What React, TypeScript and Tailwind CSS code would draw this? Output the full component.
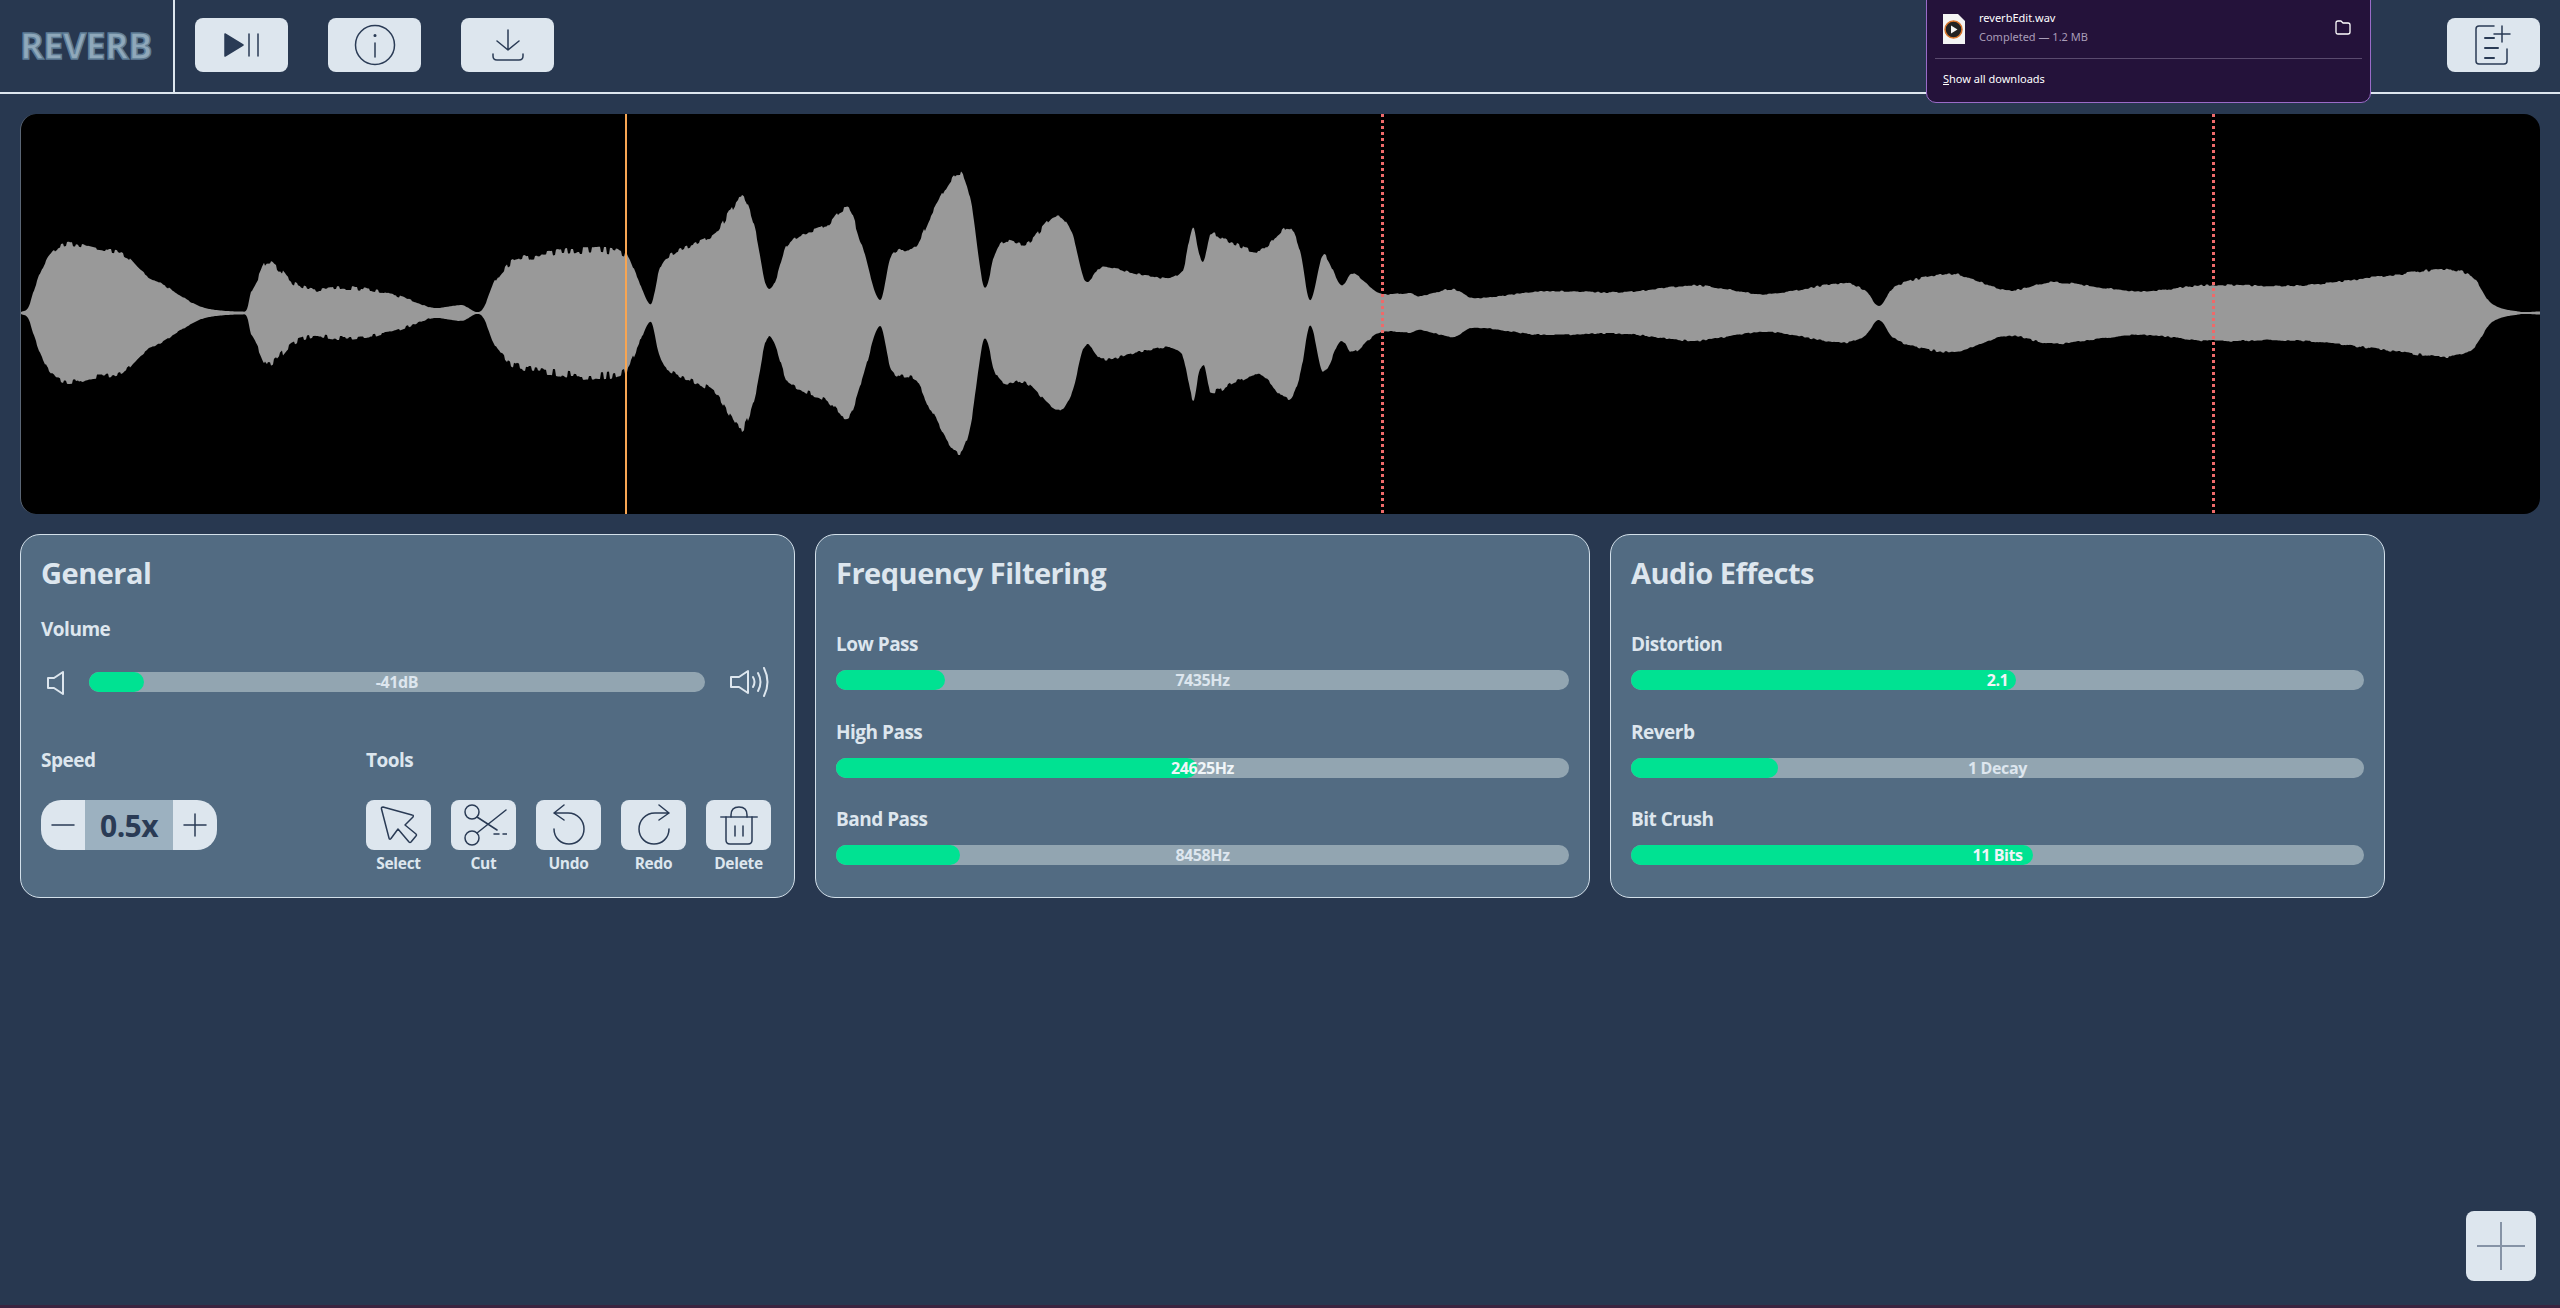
import React from "react";

const ENV: [number, number][] = [
  [20,1],[27,5],[33,23],[39,40],[49,60],[66,70],[93,65],[121,60],[143,40],[165,27],[192,10],[208,4],[241,1.5],[246,4],[250,22],[255,33],[268,55],[291,33],[313,25],[343,27],[384,22],[411,13],[433,5],[461,8],[480,2],[494,33],[510,53],[549,62],[584,66],[625,60],[636,37],[650,9],[658,43],[666,57],[713,80],[730,105],[738,117],[745,112],[755,80],[765,28],[773,30],[787,70],[823,87],[847,105],[860,72],
  [879,13],[890,57],[915,68],[931,100],[958,140],[970,110],[983,27],[994,60],[1003,72],[1025,70],[1056,98],[1071,80],[1084,33],[1101,47],[1145,38],[1181,42],[1192,87],[1198,60],[1203,53],[1209,78],[1233,70],[1260,63],[1288,87],[1299,63],[1309,13],[1322,58],[1340,28],[1351,40],[1378,20],[1408,20],[1419,17],[1452,24],[1472,15],[1540,22],[1622,21],[1691,28],[1720,25],
  [1766,19],[1843,30],[1865,22],[1878,7],[1892,25],[1919,35],[1955,39],[2007,23],[2051,31],[2139,22],[2205,28],[2303,28],[2397,39],[2449,44],[2473,35],[2490,10],[2517,1.5],[2540,1.5],
];

function ampAt(x: number) {
  for (let i = 1; i < ENV.length; i++) {
    if (x <= ENV[i][0]) {
      const [x0, a0] = ENV[i - 1];
      const [x1, a1] = ENV[i];
      const [xp, ap] = ENV[Math.max(0, i - 2)];
      const [xn, an] = ENV[Math.min(ENV.length - 1, i + 1)];
      const h = x1 - x0;
      const t = (x - x0) / h;
      const m0 = ((a1 - ap) / (x1 - xp)) * h;
      const m1 = ((an - a0) / (xn - x0)) * h;
      const t2 = t * t;
      const t3 = t2 * t;
      const v = (2 * t3 - 3 * t2 + 1) * a0 + (t3 - 2 * t2 + t) * m0 + (-2 * t3 + 3 * t2) * a1 + (t3 - t2) * m1;
      return Math.max(1, v);
    }
  }
  return 1.5;
}

function noise(i: number, s: number) {
  const v = Math.sin(i * 12.9898 + s * 78.233) * 43758.5453;
  return v - Math.floor(v);
}

function spike(x: number, s: number, a: number) {
  if (a < 6) return 0;
  if (x < 860) {
    const cell = Math.floor(x / 3);
    const on = noise(cell, 7) > 0.4 ? 1 : 0.2;
    const strength = x > 480 && x < 640 ? 0.13 : x > 250 && x < 430 ? 0.17 : 0.07;
    return a * strength * on * (0.3 + 0.7 * noise(cell, s));
  }
  return Math.min(5, a * 0.06) * noise(Math.floor(x / 3), s);
}

function wavePath() {
  const top: string[] = [];
  const bottom: string[] = [];
  for (let x = 20; x <= 2540; x++) {
    const a = ampAt(x);
    const u = a * 1.02 - spike(x, 1, a);
    const l = a * 1.02 - spike(x, 1.3, a);
    top.push(`${x - 20},${(199 - u).toFixed(1)}`);
    bottom.unshift(`${x - 20},${(199 + l).toFixed(1)}`);
  }
  return "M" + top.concat(bottom).join("L") + "Z";
}

const INK = "#2a3b55";
const LABEL = "h-[24px] leading-[22px] text-[19px] font-bold text-[#dde6ee] tracking-[-0.5px]";

function Icon({ children, w, h }: { children: React.ReactNode; w: number; h: number }) {
  return (
    <svg width={w} height={h} viewBox={`0 0 ${w} ${h}`} fill="none" stroke={INK} strokeWidth="1.5" strokeLinecap="round" strokeLinejoin="round">
      {children}
    </svg>
  );
}

function HeaderButton({ children }: { children: React.ReactNode }) {
  return <button className="w-[93px] h-[54px] rounded-lg bg-[#dde6ee] flex items-center justify-center">{children}</button>;
}

function Bar({ label, value, fill, light }: { label: string; value: string; fill: number; light?: boolean }) {
  return (
    <div className="flex flex-col">
      <div className={LABEL}>{label}</div>
      <div className="relative mt-[13px] h-[20px] rounded-full bg-[#92a5b1]">
        <div className="h-full rounded-full bg-[#00e292]" style={{ width: fill }} />
        <div className={`absolute inset-0 flex items-center justify-center text-[16px] leading-[20px] font-bold tracking-[-0.4px] ${light ? "text-[#f0f5f8]" : "text-[#dde6ee]"}`}>{value}</div>
      </div>
    </div>
  );
}

function Panel({ title, children }: { title: string; children: React.ReactNode }) {
  return (
    <section className="w-[775px] h-[364px] rounded-[20px] border border-[#d3e0ea] bg-[#526b82] px-[20px] pt-[20px] flex flex-col">
      <h2 className="h-[40px] leading-[36px] text-[29px] font-bold text-[#dde6ee] tracking-[-0.5px]">{title}</h2>
      {children}
    </section>
  );
}

function Tool({ label, children }: { label: string; children: React.ReactNode }) {
  return (
    <div className="w-[65px] flex flex-col items-center">
      <div className="w-[65px] h-[50px] rounded-lg bg-[#dde6ee] flex items-center justify-center">{children}</div>
      <div className="mt-[3px] text-[15.5px] leading-[20px] font-bold text-[#dde6ee] tracking-[-0.3px]">{label}</div>
    </div>
  );
}

export default function App() {
  return (
    <div className="relative h-[1308px] w-full overflow-hidden bg-[#283850] font-['Open_Sans','Noto_Sans',sans-serif]">
      <header className="h-[94px] border-b-2 border-[#dde6ee] flex items-stretch">
        <div className="w-[175px] border-r-2 border-[#dde6ee] pl-[20px] flex items-center">
          <span className="text-[36px] font-bold text-[#8fa8ba] tracking-[-0.6px] [-webkit-text-stroke:1.5px_#5f7d96]">REVERB</span>
        </div>
        <div className="flex-1 flex items-center pl-[20px] pr-[20px] pb-[2px] gap-[40px]">
          <HeaderButton>
            <Icon w={40} h={30}>
              <path d="M3 4 L21 15 L3 26 Z" fill={INK} stroke={INK} />
              <path d="M27 4 V26 M36 4 V26" />
            </Icon>
          </HeaderButton>
          <HeaderButton>
            <Icon w={42} h={42}>
              <circle cx="21" cy="21" r="19.5" />
              <path d="M21 19 V33" />
              <circle cx="21" cy="11.5" r="0.8" fill={INK} />
            </Icon>
          </HeaderButton>
          <HeaderButton>
            <Icon w={34} h={34}>
              <path d="M17 2 V22 M6 13 L17 22 L28 13" />
              <path d="M2 26 V28 Q2 32 6 32 H28 Q32 32 32 28 V26" />
            </Icon>
          </HeaderButton>
          <div className="ml-auto">
            <HeaderButton>
              <Icon w={40} h={42}>
                <path d="M20 2 H5 Q2 2 2 5 V37 Q2 40 5 40 H30 Q33 40 33 37 V25" />
                <path d="M28 2 V18 M20 10 H36" />
                <path d="M11 16 H20 M11 26 H24 M11 36 H20" strokeWidth="2" transform="translate(0 -2)" />
              </Icon>
            </HeaderButton>
          </div>
        </div>
      </header>

      <main className="px-[20px] pt-[20px]">
        <div className="relative h-[400px] rounded-[16px] bg-black overflow-hidden border-l border-[#5a6675]">
          <svg className="absolute left-0 top-0" width="2520" height="400" viewBox="0 0 2520 400">
            <path d={wavePath()} fill="#999999" />
          </svg>
          <div className="absolute top-0 bottom-0 left-[604px] w-[2px] bg-[#f7a552]" />
          <div className="absolute top-0 bottom-0 left-[1360px] w-[3px] bg-[repeating-linear-gradient(to_bottom,#ee6a6a_0px,#ee6a6a_3px,transparent_3px,transparent_6px)]" />
          <div className="absolute top-0 bottom-0 left-[2191px] w-[3px] bg-[repeating-linear-gradient(to_bottom,#ee6a6a_0px,#ee6a6a_3px,transparent_3px,transparent_6px)]" />
        </div>

        <div className="mt-[20px] flex gap-[20px]">
          <Panel title="General">
            <div className={`mt-[23px] ${LABEL}`}>Volume</div>
            <div className="mt-[25px] flex items-center h-[30px]">
              <svg className="ml-[5px] mt-[2px]" width="20" height="24" viewBox="0 0 20 24" fill="none" stroke="#dde6ee" strokeWidth="2" strokeLinejoin="round">
                <path d="M17 1 V23 L8 17 H2 V7 H8 Z" />
              </svg>
              <div className="relative ml-[23px] w-[616px] h-[20px] rounded-full bg-[#92a5b1]">
                <div className="h-full w-[55px] rounded-full bg-[#00e292]" />
                <div className="absolute inset-0 flex items-center justify-center text-[16px] leading-[20px] font-bold text-[#dde6ee] tracking-[-0.4px]">-41dB</div>
              </div>
              <svg className="ml-[24px]" width="42" height="30" viewBox="0 0 42 30" fill="none" stroke="#dde6ee" strokeWidth="2" strokeLinejoin="round" strokeLinecap="round">
                <path d="M19 4 V26 L10 20 H2 V10 H10 Z" />
                <path d="M24 10 Q27 15 24 20 M29 6 Q34 15 29 24 M35 1 Q42 15 35 29" />
              </svg>
            </div>
            <div className="mt-[52px] flex">
              <div className="w-[325px]">
                <div className={LABEL}>Speed</div>
                <div className="mt-[27px] flex w-[176px] h-[50px] rounded-[20px] overflow-hidden bg-[#dde6ee]">
                  <div className="w-[44px] flex items-center justify-center">
                    <Icon w={24} h={24}><path d="M1 12 H23" /></Icon>
                  </div>
                  <div className="w-[88px] bg-[#9cb1c0] flex items-center justify-center text-[30px] font-bold text-[#2a3b55] tracking-[-0.6px]">0.5x</div>
                  <div className="w-[44px] flex items-center justify-center">
                    <Icon w={24} h={24}><path d="M1 12 H23 M12 1 V23" /></Icon>
                  </div>
                </div>
              </div>
              <div>
                <div className={LABEL}>Tools</div>
                <div className="mt-[27px] flex gap-[20px]">
                  <Tool label="Select">
                    <Icon w={42} h={42}>
                      <path d="M5 3 Q3 3 3.5 5 L11 34 Q11.5 36 13 34.5 L20 25 L31 38 Q32 39 33 38 L38 32 Q39 31 38 30 L27 21 L35 13 Q36 11 34 11 Z" />
                    </Icon>
                  </Tool>
                  <Tool label="Cut">
                    <Icon w={46} h={44}>
                      <circle cx="11" cy="9" r="7" /><circle cx="11" cy="35" r="7" />
                      <path d="M16 14 L36 27 M16 30 L45 7 M33 31 H38 M42 31 H46" />
                    </Icon>
                  </Tool>
                  <Tool label="Undo">
                    <Icon w={36} h={42}>
                      <path d="M3 9 L13 1 M3 9 L13 16 M3 9 H17 C27 9 33 17 33 25 C33 34 26 40 18 40 C10 40 3 34 3 25" />
                    </Icon>
                  </Tool>
                  <Tool label="Redo">
                    <Icon w={36} h={42}>
                      <path d="M33 9 L23 1 M33 9 L23 16 M33 9 H19 C9 9 3 17 3 25 C3 34 10 40 18 40 C26 40 33 34 33 25" />
                    </Icon>
                  </Tool>
                  <Tool label="Delete">
                    <Icon w={38} h={39}>
                      <path d="M1 11 H37" strokeWidth="2" stroke="#5f6f85" />
                      <path d="M11 11 V9 C11 4 14 1 19 1 C24 1 27 4 27 9 V11" />
                      <path d="M6 11 V34 Q6 38 10 38 H28 Q32 38 32 34 V11" />
                      <path d="M15 20 V30 M23 20 V30" />
                    </Icon>
                  </Tool>
                </div>
              </div>
            </div>
          </Panel>

          <Panel title="Frequency Filtering">
            <div className="mt-[38px] flex flex-col gap-[30.5px]">
              <Bar label="Low Pass" value="7435Hz" fill={109} />
              <Bar label="High Pass" value="24625Hz" fill={361} light />
              <Bar label="Band Pass" value="8458Hz" fill={124} />
            </div>
          </Panel>

          <Panel title="Audio Effects">
            <div className="mt-[38px] flex flex-col gap-[30.5px]">
              <Bar label="Distortion" value="2.1" fill={385} light />
              <Bar label="Reverb" value="1 Decay" fill={147} />
              <Bar label="Bit Crush" value="11 Bits" fill={402} light />
            </div>
          </Panel>
        </div>
      </main>

      <div className="absolute left-[1926px] top-[-20px] w-[445px] h-[123px] rounded-[10px] border border-[#9a6bc8] bg-[#24123a] px-[8px] pt-[26px] font-['Noto_Sans',sans-serif]">
        <div className="flex items-start h-[40px]">
          <svg className="ml-[8px] mt-[7px]" width="22" height="30" viewBox="0 0 22 30">
            <path d="M0 0 H15 L22 7 V30 H0 Z" fill="#f4f4f4" />
            <circle cx="10.5" cy="15.5" r="8.5" fill="#222" stroke="#d9752b" strokeWidth="1.5" />
            <path d="M8 11.5 L14.5 15.5 L8 19.5 Z" fill="#f4f4f4" />
          </svg>
          <div className="ml-[14px]">
            <div className="text-[11px] leading-[16px] mt-[3px] text-white">reverbEdit.wav</div>
            <div className="text-[11px] leading-[16px] mt-[3px] text-[#a99db8]">Completed — 1.2 MB</div>
          </div>
          <svg className="ml-auto mr-[11px] mt-[13px]" width="16" height="15" viewBox="0 0 16 15" fill="none" stroke="#ffffff" strokeWidth="1.3" strokeLinejoin="round">
            <path d="M1 3 Q1 1 3 1 H6 L8 3 H13 Q15 3 15 5 V12 Q15 14 13 14 H3 Q1 14 1 12 Z" />
          </svg>
        </div>
        <div className="mt-[11px] border-t border-[#5a4a6e]" />
        <div className="mt-[12px] ml-[8px] text-[11px] leading-[16px] text-white"><span className="underline">S</span>how all downloads</div>
      </div>

      <button className="absolute left-[2466px] top-[1211px] w-[70px] h-[70px] rounded-lg bg-[#dde6ee] flex items-center justify-center">
        <svg width="48" height="48" viewBox="0 0 48 48" stroke="#8593a6" strokeWidth="2"><path d="M0 24 H48 M24 0 V48" /></svg>
      </button>

      <div className="absolute left-0 right-0 bottom-0 h-[3px] bg-[#3a2440]" />
    </div>
  );
}
